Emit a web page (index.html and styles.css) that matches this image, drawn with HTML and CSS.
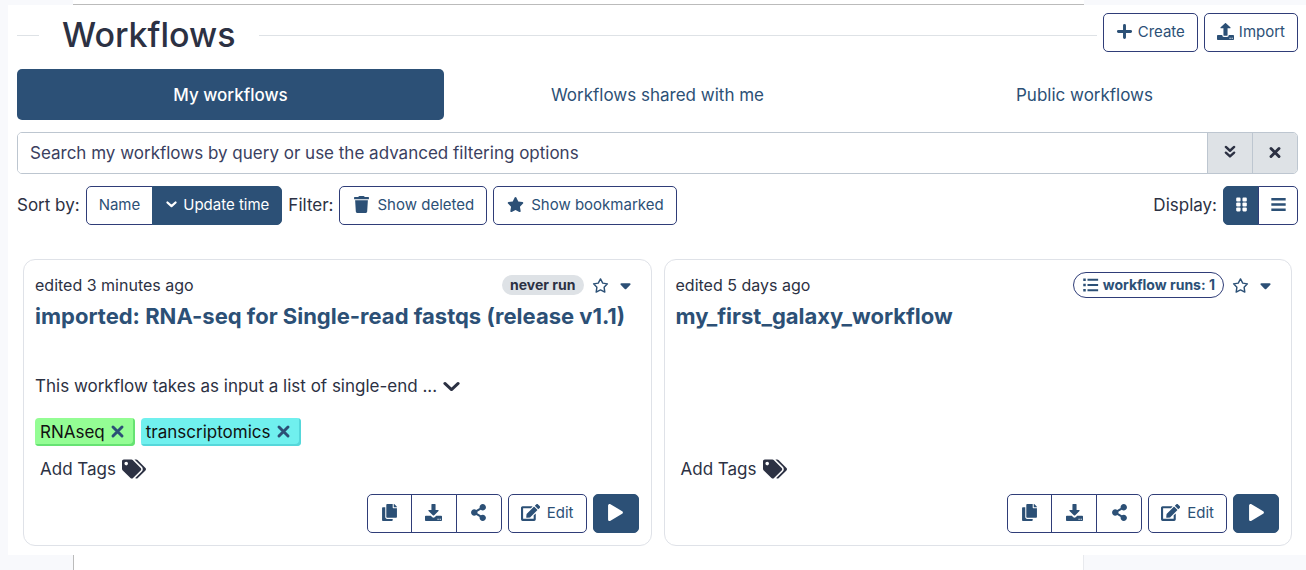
FILE: index.html
```html
<!DOCTYPE html>
<html lang="en">
<head>
<meta charset="utf-8">
<meta name="viewport" content="width=device-width, initial-scale=1">
<title>Workflows</title>
<link rel="stylesheet" href="styles.css">
</head>
<body>
<svg class="sprite" aria-hidden="true">
  <symbol id="plus" viewBox="0 0 448 512"><path class="heavy" d="M224 72v368M40 256h368"/></symbol>
  <symbol id="upload" viewBox="0 0 512 512"><path d="M208 384h96c8 0 14-6 14-14V160h72c18 0 24-20 12-32L270 8c-8-8-20-8-28 0L110 128c-12 12-6 32 12 32h72v210c0 8 6 14 14 14zM24 360h136v10c0 28 20 48 48 48h96c28 0 48-20 48-48v-10h136c14 0 24 10 24 24v104c0 14-10 24-24 24H24c-14 0-24-10-24-24V384c0-14 10-24 24-24zm352 84v32h36v-32zm64 0v32h36v-32z"/></symbol>
  <symbol id="download" viewBox="0 0 512 512"><path d="M208 0h96c8 0 14 6 14 14v166h76c18 0 24 20 12 32L270 344c-8 8-20 8-28 0L106 212c-12-12-6-32 12-32h76V14c0-8 6-14 14-14zM24 352h150l46 45c20 20 52 20 72 0l46-45h150c14 0 24 10 24 24v112c0 14-10 24-24 24H24c-14 0-24-10-24-24V376c0-14 10-24 24-24zm352 90v34h36v-34zm64 0v34h36v-34z"/></symbol>
  <symbol id="angles" viewBox="0 0 448 512"><path class="heavy" d="M72 72l152 138L376 72M72 280l152 138 152-138"/></symbol>
  <symbol id="xmark" viewBox="0 0 384 512"><path class="heavy" d="M56 120l272 272M328 120L56 392"/></symbol>
  <symbol id="xbold" viewBox="0 0 384 512"><path class="heavy" d="M72 136l240 240M312 136L72 376"/></symbol>
  <symbol id="angle" viewBox="0 0 448 512"><path class="heavy" d="M64 176l160 144 160-144"/></symbol>
  <symbol id="chevron" viewBox="0 0 512 512"><path class="heavy" d="M56 164l200 184 200-184"/></symbol>
  <symbol id="trash" viewBox="0 0 448 512"><path d="M135 18l-7 14H16C7 32 0 39 0 48v32c0 9 7 16 16 16h416c9 0 16-7 16-16V48c0-9-7-16-16-16H320l-7-14C307 7 296 0 284 0H164c-12 0-23 7-29 18zM416 128H32l21 339c2 25 23 45 48 45h246c25 0 46-20 48-45z"/></symbol>
  <symbol id="star" viewBox="0 0 576 512"><path d="M316.900 18C311.600 7 300.400 0 288.100 0s-23.400 7-28.800 18L195 150.300 51.400 171.500c-12 1.800-22 10.200-25.700 21.700s-.7 24.200 7.900 32.700L137.800 329 113.200 474.700c-2 12 3 24.200 12.900 31.300s23 8 33.800 2.300l128.300-68.500 128.300 68.500c10.800 5.700 23.900 4.900 33.800-2.300s14.900-19.300 12.900-31.300L438.500 329 542.700 225.900c8.600-8.500 11.700-21.200 7.900-32.700s-13.700-19.900-25.700-21.700L381.200 150.300z"/></symbol>
  <symbol id="star-open" viewBox="0 0 576 512"><path class="outline" d="M288 32l76 142 158 26-112 112 24 168-146-74-146 74 24-168L54 200l158-26z"/></symbol>
  <symbol id="caret" viewBox="0 0 320 512"><path d="M137 359c13 12 33 12 46 0l122-122c18-18 5-47-20-47H35c-25 0-38 29-20 47z"/></symbol>
  <symbol id="grid" viewBox="0 0 448 512"><rect x="64" y="48" width="132" height="120" rx="32"/><rect x="252" y="48" width="132" height="120" rx="32"/><rect x="64" y="196" width="132" height="120" rx="32"/><rect x="252" y="196" width="132" height="120" rx="32"/><rect x="64" y="344" width="132" height="120" rx="32"/><rect x="252" y="344" width="132" height="120" rx="32"/></symbol>
  <symbol id="bars" viewBox="0 0 448 512"><path d="M8 60h432v72H8zM8 220h432v72H8zM8 380h432v72H8z"/></symbol>
  <symbol id="list" viewBox="0 0 512 512"><path d="M24 48h80v80H24zM24 216h80v80H24zM24 384h80v80H24zM160 56h340v64H160zM160 224h340v64H160zM160 392h340v64H160z"/></symbol>
  <symbol id="tags" viewBox="0 0 640 512"><path d="M498 226L286 14c-9-9-21-14-34-14H48C22 0 0 22 0 48v204c0 13 5 25 14 34l212 212c19 19 49 19 68 0l204-204c19-19 19-49 0-68zM112 160a48 48 0 1 1 0-96 48 48 0 1 1 0 96zm514 134L422 498c-19 19-49 19-68 0l-1-1 175-174c17-17 26-40 26-63s-9-47-26-64L332 0h48c13 0 25 5 34 14l212 212c19 19 19 49 0 68z"/></symbol>
  <symbol id="copy" viewBox="0 0 448 512"><path d="M320 448v40c0 13-11 24-24 24H24c-13 0-24-11-24-24V120c0-13 11-24 24-24h72v296c0 31 25 56 56 56zm0-344V0H152c-13 0-24 11-24 24v368c0 13 11 24 24 24h272c13 0 24-11 24-24V128H344c-13 0-24-11-24-24zm121-31L375 7c-4-4-11-7-17-7h-6v96h96v-6c0-6-3-12-7-17z"/></symbol>
  <symbol id="share" viewBox="0 0 448 512"><path d="M352 320c-23 0-43 8-60 21l-102-64c3-14 3-28 0-42l102-64c17 13 37 21 60 21 53 0 96-43 96-96S405 0 352 0s-96 43-96 96c0 7 1 14 2 21l-102 64c-17-13-37-21-60-21-53 0-96 43-96 96s43 96 96 96c23 0 43-8 60-21l102 64c-1 7-2 14-2 21 0 53 43 96 96 96s96-43 96-96-43-96-96-96z"/></symbol>
  <symbol id="edit" viewBox="0 0 576 512"><path d="M403 84l90 90c4 4 4 10 0 14L274 407l-93 10c-12 1-23-9-22-22l10-93L388 84c4-4 11-4 15 0zm162-23l-49-49c-15-15-40-15-55 0l-35 35c-4 4-4 11 0 15l90 90c4 4 11 4 15 0l35-36c16-15 16-39-1-55zM384 346v102H64V128h230c3 0 6-1 8-3l40-40c8-8 2-21-8-21H48C22 64 0 86 0 112v352c0 27 22 48 48 48h352c27 0 48-21 48-48V306c0-10-13-16-20-8l-40 40c-3 2-4 5-4 8z"/></symbol>
  <symbol id="play" viewBox="0 0 448 512"><path d="M424 215L72 7C44-10 0 6 0 48v416c0 38 41 60 72 41l352-208c32-18 32-64 0-82z"/></symbol>
</svg>

<div class="edge edge-top"></div>
<main class="panel">
  <header class="heading">
    <h1>Workflows</h1>
    <div class="actions">
      <button class="btn" type="button"><svg><use href="#plus"/></svg>Create</button>
      <button class="btn" type="button"><svg><use href="#upload"/></svg>Import</button>
    </div>
  </header>

  <nav class="tabs">
    <a class="active" href="#my">My workflows</a>
    <a href="#shared">Workflows shared with me</a>
    <a href="#public">Public workflows</a>
  </nav>

  <div class="search">
    <input type="text" aria-label="Search workflows" placeholder="Search my workflows by query or use the advanced filtering options">
    <button type="button" aria-label="Advanced filters"><svg><use href="#angles"/></svg></button>
    <button type="button" aria-label="Clear search"><svg class="x"><use href="#xbold"/></svg></button>
  </div>

  <div class="toolbar">
    <span>Sort by:</span>
    <div class="group">
      <button class="btn" type="button">Name</button>
      <button class="btn solid sort" type="button"><svg><use href="#angle"/></svg>Update time</button>
    </div>
    <span>Filter:</span>
    <button class="btn filter" type="button"><svg><use href="#trash"/></svg>Show deleted</button>
    <button class="btn filter" type="button"><svg><use href="#star"/></svg>Show bookmarked</button>
    <span class="display">Display:</span>
    <div class="group view">
      <button class="btn solid" type="button" aria-label="Grid view"><svg><use href="#grid"/></svg></button>
      <button class="btn" type="button" aria-label="List view"><svg><use href="#bars"/></svg></button>
    </div>
  </div>

  <section class="cards">
    <article class="card">
      <div class="meta">
        <span class="edited">edited 3 minutes ago</span>
        <span class="badge">never run</span>
        <button class="plain" type="button" aria-label="Bookmark"><svg><use href="#star-open"/></svg></button>
        <button class="plain" type="button" aria-label="More"><svg><use href="#caret"/></svg></button>
      </div>
      <h2><a href="#rnaseq">imported: RNA-seq for Single-read fastqs (release v1.1)</a></h2>
      <p class="summary">This workflow takes as input a list of single-end ... <button class="plain dark" type="button" aria-label="Show more"><svg><use href="#chevron"/></svg></button></p>
      <div class="tags">
        <span class="tag green">RNAseq<button class="plain" type="button" aria-label="Remove RNAseq"><svg><use href="#xmark"/></svg></button></span>
        <span class="tag cyan">transcriptomics<button class="plain" type="button" aria-label="Remove transcriptomics"><svg><use href="#xmark"/></svg></button></span>
      </div>
      <button class="plain dark add" type="button">Add Tags<svg><use href="#tags"/></svg></button>
      <div class="card-actions">
        <div class="group tools">
          <button class="btn" type="button" aria-label="Copy"><svg><use href="#copy"/></svg></button>
          <button class="btn" type="button" aria-label="Download"><svg><use href="#download"/></svg></button>
          <button class="btn" type="button" aria-label="Share"><svg><use href="#share"/></svg></button>
        </div>
        <button class="btn edit" type="button"><svg><use href="#edit"/></svg>Edit</button>
        <button class="btn solid run" type="button" aria-label="Run"><svg><use href="#play"/></svg></button>
      </div>
    </article>

    <article class="card">
      <div class="meta">
        <span class="edited">edited 5 days ago</span>
        <a class="badge runs" href="#runs"><svg><use href="#list"/></svg>workflow runs: 1</a>
        <button class="plain" type="button" aria-label="Bookmark"><svg><use href="#star-open"/></svg></button>
        <button class="plain" type="button" aria-label="More"><svg><use href="#caret"/></svg></button>
      </div>
      <h2><a href="#first">my_first_galaxy_workflow</a></h2>
      <button class="plain dark add" type="button">Add Tags<svg><use href="#tags"/></svg></button>
      <div class="card-actions">
        <div class="group tools">
          <button class="btn" type="button" aria-label="Copy"><svg><use href="#copy"/></svg></button>
          <button class="btn" type="button" aria-label="Download"><svg><use href="#download"/></svg></button>
          <button class="btn" type="button" aria-label="Share"><svg><use href="#share"/></svg></button>
        </div>
        <button class="btn edit" type="button"><svg><use href="#edit"/></svg>Edit</button>
        <button class="btn solid run" type="button" aria-label="Run"><svg><use href="#play"/></svg></button>
      </div>
    </article>
  </section>
</main>
<div class="edge edge-bottom"></div>
</body>
</html>
```
FILE: styles.css
```css
* { box-sizing: border-box; }

:root {
  --blue: #2c5076;
  --ink: #2c3143;
  --grey: #dee2e6;
  --line: #bdc6d0;
}

body {
  display: flex;
  flex-direction: column;
  min-height: 100vh;
  margin: 0;
  background: #f8f9fc;
  color: var(--ink);
  font-family: Inter, "Liberation Sans", sans-serif;
  font-size: 17px;
  line-height: 24px;
}

.sprite { position: absolute; width: 0; height: 0; }
svg { width: 17px; height: 17px; fill: currentColor; flex: none; }
.heavy, .outline { fill: none; stroke: currentColor; stroke-width: 88; stroke-linecap: round; stroke-linejoin: round; }
.outline { stroke-width: 48; }

.edge { margin: 0 17% 0 73px; background: #fff; }
.edge-top { height: 5px; background: linear-gradient(#fff 4px, #bbb 4px); }
.edge-bottom { flex: 1; min-height: 15px; border-left: 1px solid #bbb; border-right: 1px solid #e8eaee; }

.panel { margin-left: 8px; padding: 8px 8px 9px 9px; background: #fff; }

button, input { font: inherit; color: inherit; }
a { color: inherit; text-decoration: none; }

.btn {
  display: inline-flex;
  align-items: center;
  justify-content: center;
  height: 39px;
  padding: 0 12px 2px;
  gap: 5px;
  border: 1px solid #2f3d78;
  border-radius: 5px;
  background: #fff;
  color: var(--blue);
  font-size: 15px;
}
.solid { background: var(--blue); border-color: var(--blue); color: #fff; }
.plain { display: inline-flex; align-items: center; padding: 0; border: 0; background: none; color: var(--blue); }
.dark { color: var(--ink); }
.group { display: flex; }
.group .btn + .btn { margin-left: -1px; border-top-left-radius: 0; border-bottom-left-radius: 0; }
.group .btn:not(:last-child) { border-top-right-radius: 0; border-bottom-right-radius: 0; }

.heading { display: flex; height: 56px; }
h1 { display: flex; flex: 1; align-items: center; gap: 23px; height: 44px; margin: 0; font-size: 34px; font-weight: 500; line-height: 44px; }
h1::before, h1::after { content: ""; height: 1px; background: var(--grey); }
h1::before { width: 22px; }
h1::after { flex: 1; }
.actions { display: flex; gap: 6px; margin-left: 6px; }

.tabs { display: grid; grid-template-columns: repeat(3, 1fr); }
.tabs a { padding: 14px 0 13px; border-radius: 5px; color: var(--blue); text-align: center; }
.tabs .active { background: var(--blue); color: #fff; font-weight: 500; }

.search { display: flex; height: 42px; margin-top: 12px; border: 1px solid var(--line); border-radius: 5px; overflow: hidden; }
.search input { flex: 1; min-width: 0; padding: 0 12px; border: 0; }
.search input::placeholder { color: #3a4060; opacity: 1; }
.search button { display: flex; align-items: center; justify-content: center; width: 45px; padding: 0 0 2px; border: 0; border-left: 1px solid var(--line); background: var(--grey); }
.search svg { width: 14px; height: 14px; }
.search .x { width: 16px; height: 17px; }

.toolbar { display: flex; align-items: center; gap: 6px; margin-top: 12px; }
.toolbar > span { padding-bottom: 2px; }
.sort svg { width: 13px; height: 13px; }
.filter { padding-left: 13px; }
.filter svg { margin-right: 2px; }
.display { margin-left: auto; }
.view .btn { width: 40px; padding: 0 0 2px; }
.view .btn:first-child { width: 36px; }

.cards { display: grid; grid-template-columns: 1fr 1fr; gap: 12px; margin: 34px 6px 0; }
.card { display: flex; flex-direction: column; min-height: 287px; padding: 12px 12px 12px 11px; border: 1px solid #dfe2e8; border-radius: 12px; }
.meta { display: flex; align-items: center; gap: 8px; height: 26px; padding-right: 5px; font-size: 16px; }
.edited { margin-right: auto; }
.badge { display: flex; align-items: center; gap: 4px; padding: 0 8px; border-radius: 13px; background: var(--grey); font-size: 14px; font-weight: 700; line-height: 20px; }
.runs { padding: 1px 8px; border: 1px solid #2f3d78; background: #fff; color: var(--blue); line-height: 22px; }
.runs svg { width: 17px; height: 16px; }
h2 { margin: 4px 0 0; color: var(--blue); font-size: 22px; font-weight: 700; line-height: 28px; }
.summary { display: flex; align-items: center; gap: 6px; margin: 44px 0 20px; }
.tags { display: flex; gap: 6px; margin-bottom: 10px; }
.tag { display: flex; align-items: center; gap: 4px; height: 28px; padding: 0 9px 1px 5px; border-radius: 4px; color: #111; }
.green { background: #94fd94; box-shadow: inset -2px -2px 0 #66e272; }
.cyan { background: #70f0ee; box-shadow: inset -2px -2px 0 #55d7da; }
.add { gap: 6px; align-self: flex-start; margin: auto 0 0 5px; }
.add svg { width: 24px; height: 20px; }
.card-actions { display: flex; justify-content: flex-end; gap: 6px; margin-top: 13px; }
.tools .btn { width: 45px; padding: 0 0 2px; }
.tools .btn + .btn { width: 46px; }
.edit svg { width: 19px; margin-right: 2px; }
.run { width: 46px; padding: 0 0 2px; }
```
